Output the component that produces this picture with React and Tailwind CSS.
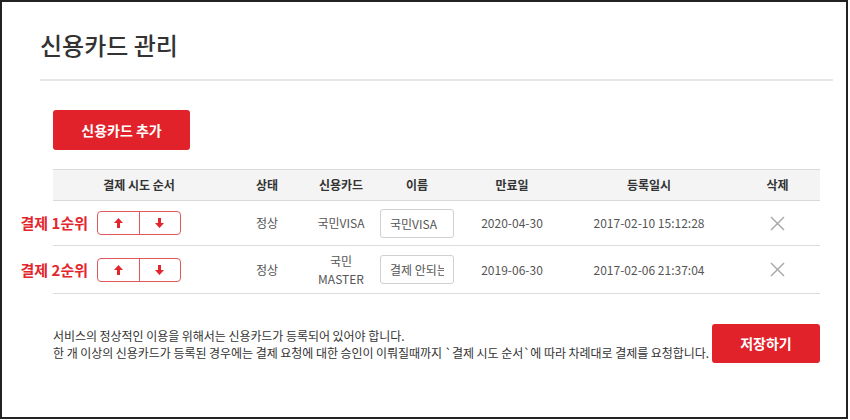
const cards = [
  { rank: 1, status: '정상', card: ['국민VISA'], name: '국민VISA', expire: '2020-04-30', created: '2017-02-10 15:12:28' },
  { rank: 2, status: '정상', card: ['국민', 'MASTER'], name: '결제 안되는 카드', expire: '2019-06-30', created: '2017-02-06 21:37:04' },
]

const ArrowUp = () => (
  <svg width="9" height="10" viewBox="0 0 9 10" fill="#e3262d">
    <path d="M4.5 0 L9 5 L6 5 L6 10 L3 10 L3 5 L0 5 Z" />
  </svg>
)

const ArrowDown = () => (
  <svg width="9" height="10" viewBox="0 0 9 10" fill="#e3262d">
    <path d="M3 0 L6 0 L6 5 L9 5 L4.5 10 L0 5 L3 5 Z" />
  </svg>
)

const CloseIcon = () => (
  <svg width="15" height="15" viewBox="0 0 15 15" stroke="#a8a8a8" strokeWidth="1.4">
    <line x1="1" y1="1" x2="14" y2="14" />
    <line x1="14" y1="1" x2="1" y2="14" />
  </svg>
)

export default function App() {
  return (
    <div className="w-[848px] h-[419px] border-2 border-[#222] bg-white font-['Noto_Sans_CJK_KR',sans-serif] text-[#333]">

      {/* Title */}
      <div className="pl-[38px] pr-[13px] pt-[27px]">
        <h1 className="text-[24px] leading-8 font-medium text-[#333]">신용카드 관리</h1>
        <div className="mt-[18px] h-[2px] bg-[#e6e6e6]"></div>
      </div>

      <div className="pl-[51px] w-[818px]">
        <button className="mt-[29px] w-[137px] h-[40px] rounded-[3px] bg-[#e2222b] text-white text-[14px] font-bold">
          신용카드 추가
        </button>

        {/* Card table */}
        <table className="mt-[19px] w-[767px] table-fixed border-collapse text-[12px]">
          <colgroup>
            <col className="w-[172px]" />
            <col className="w-[84px]" />
            <col className="w-[64px]" />
            <col className="w-[88px]" />
            <col className="w-[102px]" />
            <col className="w-[172px]" />
            <col className="w-[85px]" />
          </colgroup>
          <thead>
            <tr className="h-[31px] bg-[#f4f4f4] border-t border-b border-[#d9d9d9] text-[#333] font-bold">
              <th>결제 시도 순서</th>
              <th>상태</th>
              <th>신용카드</th>
              <th>이름</th>
              <th>만료일</th>
              <th>등록일시</th>
              <th>삭제</th>
            </tr>
          </thead>
          <tbody className="text-[#555]">
            {cards.map((c) => (
              <tr key={c.rank} className={`border-b border-[#dcdcdc] text-center ${c.rank === 1 ? 'h-[45px]' : 'h-[48px]'}`}>
                <td>
                  <div className="relative mx-auto w-[84px] h-[24px] flex border border-[#e0575c] rounded-[4px]">
                    <span className="absolute right-full mr-[10px] top-1/2 -translate-y-1/2 whitespace-nowrap text-[15px] font-bold text-[#e3262d]">
                      결제 {c.rank}순위
                    </span>
                    <button className="flex-1 flex items-center justify-center border-r border-[#e0575c]"><ArrowUp /></button>
                    <button className="flex-1 flex items-center justify-center"><ArrowDown /></button>
                  </div>
                </td>
                <td>{c.status}</td>
                <td className="leading-[18px]">
                  {c.card.map((t) => <div key={t}>{t}</div>)}
                </td>
                <td>
                  <input
                    readOnly
                    defaultValue={c.name}
                    className="w-[74px] h-[29px] px-[9px] border border-[#d0d0d0] rounded-[3px] text-[12px] text-[#555] outline-none"
                  />
                </td>
                <td>{c.expire}</td>
                <td>{c.created}</td>
                <td>
                  <div className="flex justify-center"><CloseIcon /></div>
                </td>
              </tr>
            ))}
          </tbody>
        </table>

        {/* Notice + save */}
        <div className="mt-[30px] w-[767px] flex items-center justify-between">
          <div className="text-[12px] leading-[17px] tracking-[-0.05px] text-[#333]">
            <p>서비스의 정상적인 이용을 위해서는 신용카드가 등록되어 있어야 합니다.</p>
            <p>한 개 이상의 신용카드가 등록된 경우에는 결제 요청에 대한 승인이 이뤄질때까지 `결제 시도 순서`에 따라 차례대로 결제를 요청합니다.</p>
          </div>
          <button className="w-[108px] h-[39px] rounded-[3px] bg-[#e2222b] text-white text-[14px] font-bold">
            저장하기
          </button>
        </div>
      </div>

    </div>
  )
}
